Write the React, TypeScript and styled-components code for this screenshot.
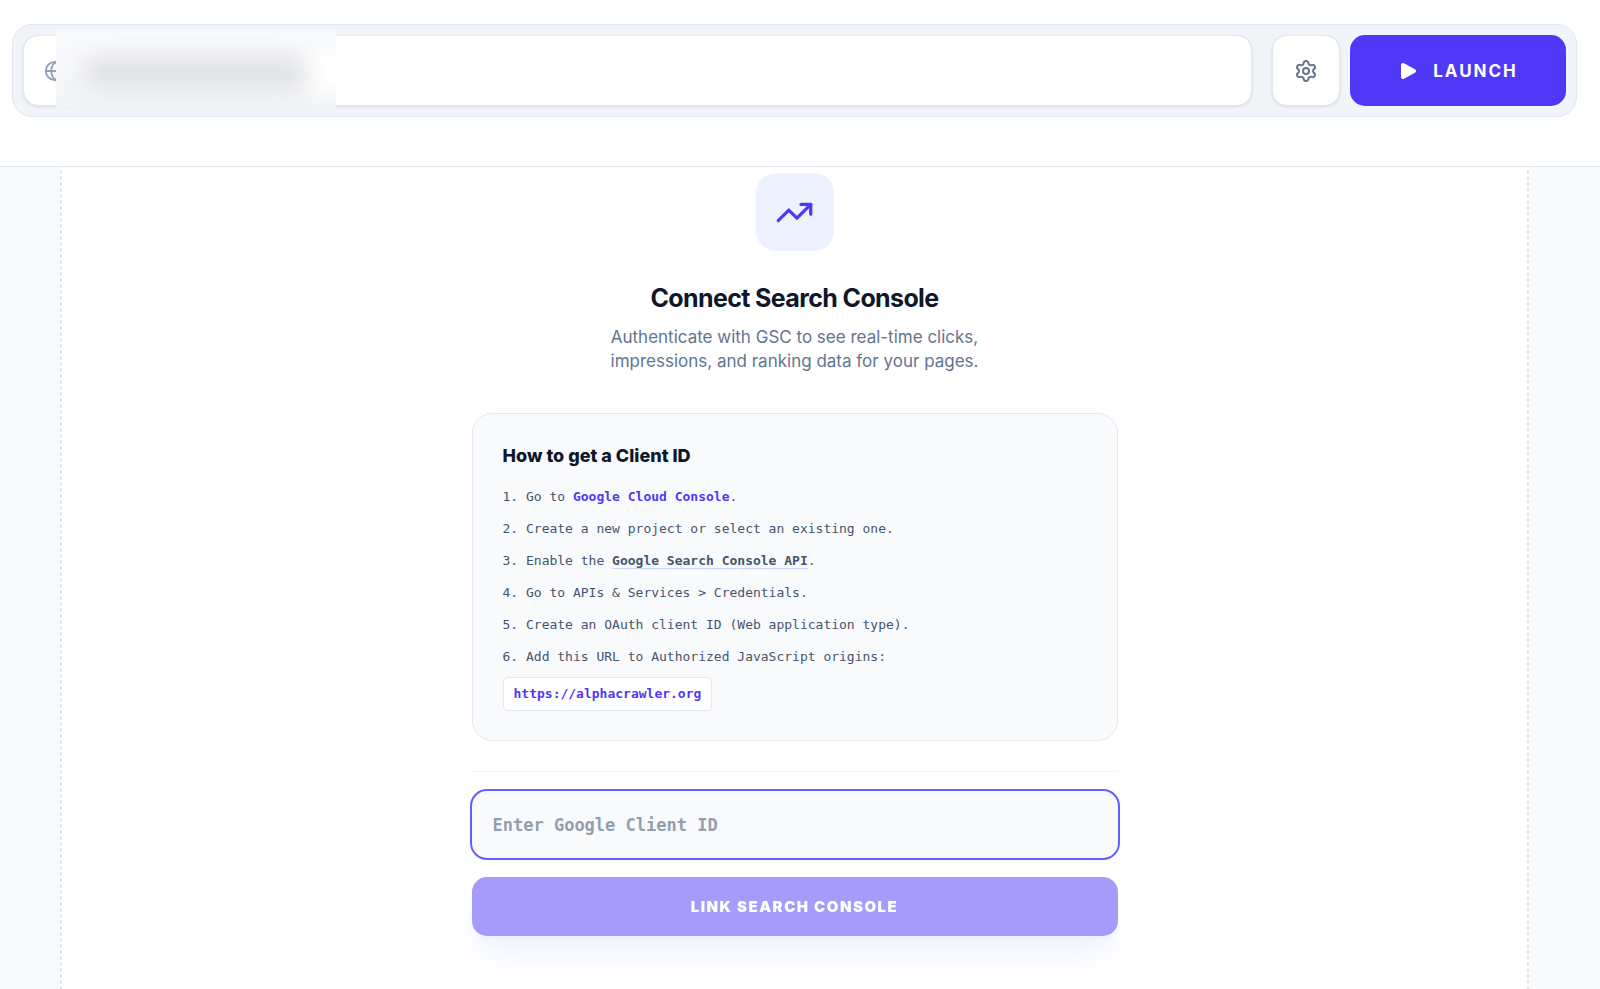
import React from "react";
import styled, { createGlobalStyle } from "styled-components";
import { Globe, Settings, TrendingUp } from "lucide-react";

const sans = `Inter, "Liberation Sans", sans-serif`;
const mono = `"DejaVu Sans Mono", "Liberation Mono", monospace`;

const color = {
  ink: "#0f172b",
  body: "#45556c",
  muted: "#62748e",
  faint: "#90a1b9",
  line: "#e2e8f0",
  soft: "#f1f5f9",
  page: "#f8fafc",
  brand: "#4f39f6",
  ring: "#615fff",
  tint: "#eef2ff",
};

const GlobalStyle = createGlobalStyle`
  *, *::before, *::after { box-sizing: border-box; }
  body {
    margin: 0;
    background: ${color.page};
    color: ${color.ink};
    font-family: ${sans};
    -webkit-font-smoothing: antialiased;
  }
  button, input { font: inherit; }
  h1, h2, p, ol { margin: 0; padding: 0; }
`;

const Page = styled.div`
  display: flex;
  flex-direction: column;
  height: 100vh;
  overflow: hidden;
`;

const Header = styled.header`
  flex: none;
  padding: 24px 23px 49px 12px;
  background: #fff;
  border-bottom: 1px solid ${color.line};
`;

const Toolbar = styled.form`
  display: flex;
  gap: 10px;
  padding: 10px;
  background: ${color.soft};
  border: 1px solid ${color.line};
  border-radius: 20px;
`;

const AddressField = styled.label`
  position: relative;
  flex: 1;
  display: flex;
  align-items: center;
  gap: 14px;
  height: 71px;
  margin-right: 10px;
  padding: 0 20px;
  background: #fff;
  border: 1px solid ${color.line};
  border-radius: 15px;
  box-shadow: 0 1px 3px rgba(15, 23, 43, 0.12);
  color: ${color.faint};
`;

const AddressInput = styled.input`
  flex: 1;
  min-width: 0;
  border: 0;
  outline: 0;
  background: transparent;
  color: ${color.ink};
  font-size: 17px;
`;

/* Frosted cover that hides the crawled address. */
const PrivacyVeil = styled.span`
  position: absolute;
  left: 32px;
  top: -7px;
  width: 280px;
  height: 79px;
  overflow: hidden;
  background: linear-gradient(#f8fafc, #f7f8fa 45%, #f2f4f6);

  &::before {
    content: "";
    position: absolute;
    right: -16px;
    top: 22px;
    width: 44px;
    height: 40px;
    background: #fff;
    filter: blur(10px);
  }

  &::after {
    content: "";
    position: absolute;
    left: 28px;
    top: 30px;
    width: 222px;
    height: 28px;
    border-radius: 14px;
    background: #dcdee3;
    filter: blur(12px);
  }
`;

const SettingsButton = styled.button`
  display: flex;
  align-items: center;
  justify-content: center;
  width: 68px;
  padding: 0;
  background: #fff;
  border: 1px solid ${color.line};
  border-radius: 15px;
  box-shadow: 0 1px 3px rgba(15, 23, 43, 0.12);
  color: ${color.muted};
`;

const LaunchButton = styled.button`
  display: flex;
  align-items: center;
  justify-content: center;
  gap: 16px;
  width: 216px;
  padding: 0 0 0 2px;
  border: 0;
  border-radius: 15px;
  background: ${color.brand};
  color: #fff;
  font-size: 17px;
  font-weight: 700;
  letter-spacing: 2px;
`;

const Main = styled.main`
  flex: 1;
  display: flex;
  min-height: 0;
  padding: 0 71px 0 60px;
`;

const dashes = `repeating-linear-gradient(${color.line} 0 4px, transparent 4px 6px)`;

const Panel = styled.section`
  flex: 1;
  display: flex;
  flex-direction: column;
  align-items: center;
  padding: 6px 24px 0;
  background:
    ${dashes} left 0 top 3px / 2px 100% no-repeat,
    ${dashes} right 0 top 3px / 2px 100% no-repeat,
    #fff;
`;

const IconTile = styled.div`
  display: flex;
  align-items: center;
  justify-content: center;
  flex: none;
  width: 78px;
  height: 78px;
  border-radius: 20px;
  background: ${color.tint};
  color: ${color.brand};
`;

const Title = styled.h1`
  margin-top: 30px;
  font-size: 25px;
  line-height: 34px;
  font-weight: 700;
  letter-spacing: -0.025em;
`;

const Lead = styled.p`
  margin-top: 10px;
  color: ${color.muted};
  font-size: 17px;
  line-height: 24px;
  text-align: center;
`;

const Column = styled.div`
  display: flex;
  flex-direction: column;
  width: 100%;
  max-width: 646px;
  margin-top: 40px;
`;

const Card = styled.section`
  padding: 30px 30px 29px;
  background: ${color.page};
  border: 1px solid ${color.line};
  border-radius: 20px;
`;

const CardTitle = styled.h2`
  font-size: 18px;
  line-height: 24px;
  font-weight: 800;
`;

const Steps = styled.ol`
  display: flex;
  flex-direction: column;
  gap: 10px;
  margin-top: 18px;
  list-style: none;
  color: ${color.body};
  font-family: ${mono};
  font-size: 13px;
  line-height: 22px;
`;

const StepLink = styled.a`
  color: ${color.brand};
  font-weight: 700;
  text-decoration: none;
`;

const Term = styled.strong`
  border-bottom: 1px solid #c6d2ff;
`;

const OriginUrl = styled.code`
  display: block;
  width: fit-content;
  margin-top: 9px;
  padding: 5px 10px;
  background: #fff;
  border: 1px solid ${color.line};
  border-radius: 5px;
  color: ${color.brand};
  font-family: inherit;
  font-weight: 700;
`;

const LinkForm = styled.form`
  display: flex;
  flex-direction: column;
  gap: 19px;
  margin-top: 30px;
  padding-top: 19px;
  border-top: 1px solid ${color.soft};
`;

const ClientIdInput = styled.input`
  width: 100%;
  height: 67px;
  padding: 0 21px;
  background: ${color.page};
  border: 0;
  border-radius: 15px;
  outline: 0;
  box-shadow: 0 0 0 2px ${color.ring};
  color: ${color.ink};
  font-family: ${mono};
  font-size: 17px;
  font-weight: 700;

  &::placeholder {
    color: #949ead;
    opacity: 1;
  }
`;

const LinkButton = styled.button`
  height: 59px;
  padding: 0;
  border: 0;
  border-radius: 15px;
  background: ${color.brand};
  box-shadow: 0 24px 30px -6px #e0e7ff, 0 10px 12px -7px #e0e7ff;
  color: #fff;
  font-size: 15px;
  font-weight: 900;
  letter-spacing: 0.1em;
  opacity: 0.5;
`;

const PlayIcon = () => (
  <svg width="17" height="18" viewBox="0 0 17 18" aria-hidden="true">
    <path
      d="M3 3v12l11-6z"
      fill="currentColor"
      stroke="currentColor"
      strokeWidth="4"
      strokeLinejoin="round"
    />
  </svg>
);

export default function App() {
  return (
    <>
      <GlobalStyle />
      <Page>
        <Header>
          <Toolbar onSubmit={(e) => e.preventDefault()}>
            <AddressField>
              <Globe size={22} />
              <AddressInput type="url" aria-label="Website address" />
              <PrivacyVeil />
            </AddressField>
            <SettingsButton type="button" aria-label="Settings">
              <Settings size={24} />
            </SettingsButton>
            <LaunchButton type="submit">
              <PlayIcon />
              LAUNCH
            </LaunchButton>
          </Toolbar>
        </Header>
        <Main>
          <Panel>
            <IconTile>
              <TrendingUp size={39} />
            </IconTile>
            <Title>Connect Search Console</Title>
            <Lead>
              Authenticate with GSC to see real-time clicks,
              <br />
              impressions, and ranking data for your pages.
            </Lead>
            <Column>
              <Card>
                <CardTitle>How to get a Client ID</CardTitle>
                <Steps>
                  <li>
                    1. Go to <StepLink href="#cloud-console">Google Cloud Console</StepLink>.
                  </li>
                  <li>2. Create a new project or select an existing one.</li>
                  <li>
                    3. Enable the <Term>Google Search Console API</Term>.
                  </li>
                  <li>4. Go to APIs &amp; Services &gt; Credentials.</li>
                  <li>5. Create an OAuth client ID (Web application type).</li>
                  <li>
                    6. Add this URL to Authorized JavaScript origins:
                    <OriginUrl>https://alphacrawler.org</OriginUrl>
                  </li>
                </Steps>
              </Card>
              <LinkForm onSubmit={(e) => e.preventDefault()}>
                <ClientIdInput
                  type="text"
                  aria-label="Google Client ID"
                  placeholder="Enter Google Client ID"
                />
                <LinkButton type="submit">LINK SEARCH CONSOLE</LinkButton>
              </LinkForm>
            </Column>
          </Panel>
        </Main>
      </Page>
    </>
  );
}
